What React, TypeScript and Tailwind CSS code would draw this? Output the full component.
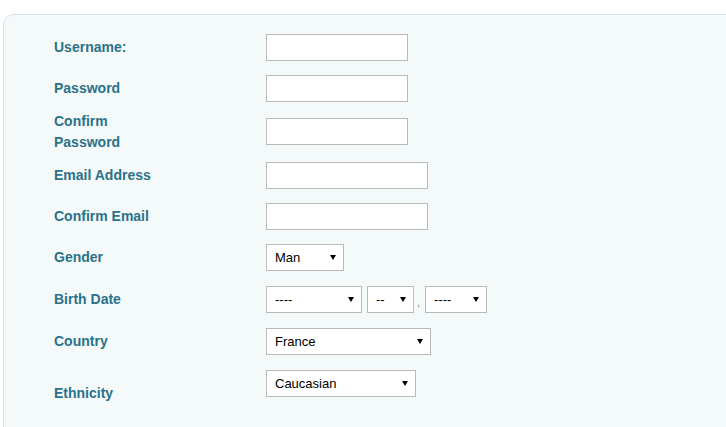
import React from "react";

const Arrow = () => (
  <svg width="6" height="5" viewBox="0 0 6 5" className="shrink-0">
    <polygon points="0,0 6,0 3,5" fill="#000" />
  </svg>
);

const Input = ({ w }: { w: string }) => (
  <div className={`${w} h-[27px] border border-[#b9b9b9] bg-white`} />
);

const Select = ({ w, text }: { w: string; text: string }) => (
  <div
    className={`${w} h-[27px] border border-[#b9b9b9] bg-white flex items-center justify-between pl-[8px] pr-[7px] text-[13px] text-black`}
  >
    <span className="leading-none">{text}</span>
    <Arrow />
  </div>
);

const Label = ({ children }: { children: React.ReactNode }) => (
  <div className="w-[212px] shrink-0 text-[14px] leading-[21px] font-bold text-[#2a7189]">
    {children}
  </div>
);

export default function App() {
  return (
    <div
      className="w-[726px] h-[427px] overflow-hidden bg-white"
      style={{ fontFamily: '"Liberation Sans", Arial, sans-serif' }}
    >
      <div className="ml-[3px] mt-[14px] w-[760px] h-[440px] border border-[#cfe5ee] rounded-tl-[11px] bg-[#f4fafa] pl-[50px] pt-[12px]">
        <div className="flex items-center h-[41px]">
          <Label>Username:</Label>
          <Input w="w-[142px]" />
        </div>
        <div className="flex items-center h-[41px]">
          <Label>Password</Label>
          <Input w="w-[142px]" />
        </div>
        <div className="flex items-center h-[45px]">
          <Label>
            Confirm
            <br />
            Password
          </Label>
          <Input w="w-[142px]" />
        </div>
        <div className="flex items-center h-[43px]">
          <Label>Email Address</Label>
          <Input w="w-[162px]" />
        </div>
        <div className="flex items-center h-[39px]">
          <Label>Confirm Email</Label>
          <Input w="w-[162px]" />
        </div>
        <div className="flex items-center h-[43px]">
          <Label>Gender</Label>
          <Select w="w-[78px]" text="Man" />
        </div>
        <div className="flex items-center h-[41px]">
          <Label>Birth Date</Label>
          <div className="flex items-stretch">
            <Select w="w-[96px]" text="----" />
            <div className="w-[5px]" />
            <Select w="w-[47px]" text="--" />
            <span className="w-[11px] pl-[3px] self-end mb-[5px] text-[11px] leading-none text-[#888]">,</span>
            <Select w="w-[62px]" text="----" />
          </div>
        </div>
        <div className="flex items-center h-[43px]">
          <Label>Country</Label>
          <Select w="w-[165px]" text="France" />
        </div>
        <div className="flex items-start">
          <div className="mt-[20px]">
            <Label>Ethnicity</Label>
          </div>
          <div className="mt-[7px]">
            <Select w="w-[150px]" text="Caucasian" />
          </div>
        </div>
      </div>
    </div>
  );
}
